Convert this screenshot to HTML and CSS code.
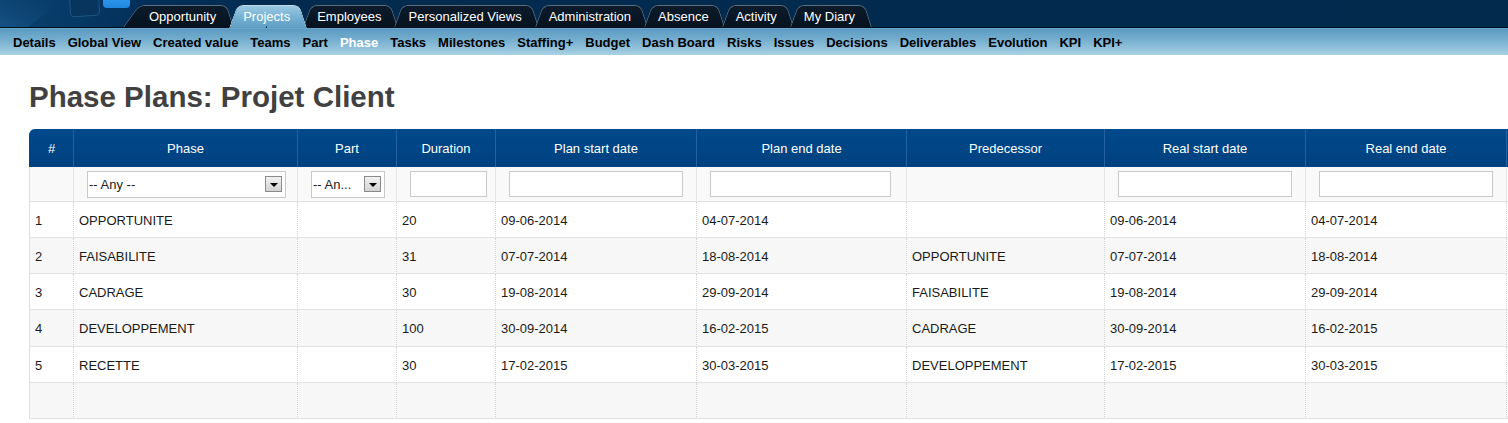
FILE: index.html
```html
<!DOCTYPE html>
<html lang="en">
<head>
<meta charset="utf-8">
<title>Phase Plans: Projet Client</title>
<link rel="stylesheet" href="styles.css">
</head>
<body>
<header class="topbar">
  <div class="logo">
    <svg width="136" height="27" viewBox="0 0 136 27" aria-hidden="true">
      <defs>
        <linearGradient id="glow" x1="0" y1="1" x2="1" y2="0">
          <stop offset="0" stop-color="#1a5a8e" stop-opacity=".7"/>
          <stop offset="1" stop-color="#0b3f6e" stop-opacity="0"/>
        </linearGradient>
        <linearGradient id="blue" x1="0" y1="0" x2="0" y2="1">
          <stop offset="0" stop-color="#3aa2f5"/>
          <stop offset="1" stop-color="#1f86e0"/>
        </linearGradient>
      </defs>
      <path d="M0 0 H62 L28 27 H0 Z" fill="url(#glow)"/>
      <rect x="70" y="-7" width="29" height="23" rx="4" fill="#08355e" stroke="#1d5684" stroke-width="1" transform="rotate(-4 85 5)"/>
      <rect x="103" y="-8" width="27" height="16" rx="4" fill="url(#blue)"/>
    </svg>
  </div>
  <nav class="tabs">
    <a class="tab first">Opportunity</a>
    <a class="tab active">Projects</a>
    <a class="tab">Employees</a>
    <a class="tab">Personalized Views</a>
    <a class="tab">Administration</a>
    <a class="tab">Absence</a>
    <a class="tab">Activity</a>
    <a class="tab">My Diary</a>
  </nav>
</header>
<nav class="subnav">
  <a>Details</a>
  <a>Global View</a>
  <a>Created value</a>
  <a>Teams</a>
  <a>Part</a>
  <a class="current">Phase</a>
  <a>Tasks</a>
  <a>Milestones</a>
  <a>Staffing+</a>
  <a>Budget</a>
  <a>Dash Board</a>
  <a>Risks</a>
  <a>Issues</a>
  <a>Decisions</a>
  <a>Deliverables</a>
  <a>Evolution</a>
  <a>KPI</a>
  <a>KPI+</a>
</nav>
<main class="content">
  <h1 class="title">Phase Plans: Projet Client</h1>
  <div class="table-wrap">
    <table class="grid">
      <colgroup>
        <col class="c-num"><col class="c-phase"><col class="c-part"><col class="c-dur">
        <col class="c-pstart"><col class="c-pend"><col class="c-pred"><col class="c-rstart">
        <col class="c-rend"><col class="c-extra">
      </colgroup>
      <thead>
        <tr class="head-row">
          <th>#</th><th>Phase</th><th>Part</th><th>Duration</th><th>Plan start date</th>
          <th>Plan end date</th><th>Predecessor</th><th>Real start date</th><th>Real end date</th><th></th>
        </tr>
        <tr class="filter-row">
          <td></td>
          <td><div class="fake-select w-phase"><span>-- Any --</span><span class="sel-btn"></span></div></td>
          <td><div class="fake-select w-part"><span>-- An...</span><span class="sel-btn"></span></div></td>
          <td><input class="filter-input w-dur" type="text"></td>
          <td><input class="filter-input w-pstart" type="text"></td>
          <td><input class="filter-input w-pend" type="text"></td>
          <td></td>
          <td><input class="filter-input w-rstart" type="text"></td>
          <td><input class="filter-input w-rend" type="text"></td>
          <td></td>
        </tr>
      </thead>
      <tbody>
        <tr><td>1</td><td>OPPORTUNITE</td><td></td><td>20</td><td>09-06-2014</td><td>04-07-2014</td><td></td><td>09-06-2014</td><td>04-07-2014</td><td></td></tr>
        <tr><td>2</td><td>FAISABILITE</td><td></td><td>31</td><td>07-07-2014</td><td>18-08-2014</td><td>OPPORTUNITE</td><td>07-07-2014</td><td>18-08-2014</td><td></td></tr>
        <tr><td>3</td><td>CADRAGE</td><td></td><td>30</td><td>19-08-2014</td><td>29-09-2014</td><td>FAISABILITE</td><td>19-08-2014</td><td>29-09-2014</td><td></td></tr>
        <tr class="tall"><td>4</td><td>DEVELOPPEMENT</td><td></td><td>100</td><td>30-09-2014</td><td>16-02-2015</td><td>CADRAGE</td><td>30-09-2014</td><td>16-02-2015</td><td></td></tr>
        <tr><td>5</td><td>RECETTE</td><td></td><td>30</td><td>17-02-2015</td><td>30-03-2015</td><td>DEVELOPPEMENT</td><td>17-02-2015</td><td>30-03-2015</td><td></td></tr>
        <tr class="empty"><td></td><td></td><td></td><td></td><td></td><td></td><td></td><td></td><td></td><td></td></tr>
      </tbody>
    </table>
  </div>
</main>
</body>
</html>
```

FILE: styles.css
```css
* { box-sizing: border-box; }

html, body {
  margin: 0;
  padding: 0;
  overflow: hidden;
}

body {
  font-family: "Liberation Sans", Arial, sans-serif;
  font-size: 13px;
  color: #1a1a1a;
  background: #fff;
}

/* ---------- top bar ---------- */
.topbar {
  display: flex;
  height: 28px;
  background: linear-gradient(100deg, #0b4372 0, #063a66 70px, #03305a 140px, #022b4f 260px, #012a4d 100%);
  border-bottom: 1px solid #00101e;
}

.logo {
  flex: none;
  width: 136px;
  height: 27px;
  overflow: hidden;
}

.logo svg { display: block; }

.tabs {
  display: flex;
  align-items: flex-end;
  gap: 1px;
  height: 27px;
}

.tab {
  position: relative;
  z-index: 1;
  height: 22px;
  line-height: 23px;
  padding: 0 13px;
  color: #fff;
  font-size: 13px;
  white-space: nowrap;
  text-decoration: none;
}

.tab::before,
.tab::after {
  content: "";
  position: absolute;
  top: 0;
  bottom: 0;
  z-index: -1;
  background: linear-gradient(#0c1b2b, #06121f);
  border: 1px solid #5c6d7e;
  border-bottom: none;
}

.tab::before {
  left: -1px;
  right: 50%;
  transform: skewX(-20deg);
  transform-origin: 0 100%;
  border-right: none;
  border-radius: 6px 0 0 0;
}

.tab::after {
  left: 50%;
  right: -4px;
  transform: skewX(18deg);
  transform-origin: 100% 100%;
  border-left: none;
  border-radius: 0 6px 0 0;
}

.tab.first::before {
  left: -13px;
  transform: skewX(-36deg);
}

.tab.active { z-index: 5; }

.tab.active::before,
.tab.active::after {
  bottom: -1px;
  background: linear-gradient(#9ac8e2, #74afd1 55%, #5e9ec4);
  border-color: #b9d9ea;
}

/* ---------- sub nav ---------- */
.subnav {
  display: flex;
  align-items: center;
  gap: 12px;
  height: 27px;
  padding-left: 13px;
  background: linear-gradient(#5b9bc1, #78b0d0 45%, #a9d1e4);
  border-top: 1px solid #6aa6c8;
}

.subnav a {
  font-weight: bold;
  font-size: 13px;
  color: #000;
  white-space: nowrap;
}

.subnav a.current { color: #fff; }

/* ---------- content ---------- */
.title {
  margin: 26px 0 16px 29px;
  font-size: 29.5px;
  line-height: 32px;
  font-weight: bold;
  color: #414141;
}

.table-wrap {
  margin-left: 29px;
  overflow: hidden;
}

.grid {
  table-layout: fixed;
  border-collapse: separate;
  border-spacing: 0;
  width: 1627px;
}

.c-num { width: 45px; }
.c-phase { width: 224px; }
.c-part { width: 99px; }
.c-dur { width: 99px; }
.c-pstart { width: 201px; }
.c-pend { width: 210px; }
.c-pred { width: 198px; }
.c-rstart { width: 201px; }
.c-rend { width: 201px; }
.c-extra { width: 149px; }

.head-row th {
  height: 38px;
  padding: 0 4px;
  background: linear-gradient(#00498b, #00417f);
  color: #fff;
  font-weight: normal;
  font-size: 13px;
  text-align: center;
  border-right: 1px solid #2461a0;
  white-space: nowrap;
}

.head-row th:first-child {
  border-left: 1px solid #00498b;
  border-top-left-radius: 6px;
}

.filter-row td {
  height: 35px;
  padding: 0 0 0 13px;
  background: #f9f9f9;
  border-right: 1px solid #e6e6e6;
  border-bottom: 1px solid #e2e2e2;
  vertical-align: middle;
}

.filter-row td:first-child { border-left: 1px solid #dedede; }

.fake-select {
  display: flex;
  align-items: center;
  justify-content: space-between;
  height: 27px;
  padding: 0 3px 0 1px;
  background: #fff;
  border: 1px solid #c9c9c9;
  color: #222;
  font-size: 13px;
  white-space: nowrap;
}

.sel-btn {
  display: flex;
  align-items: center;
  justify-content: center;
  width: 17px;
  height: 16px;
  padding-top: 2px;
  border: 1px solid #8a8a8a;
  background: linear-gradient(#f2f2f2, #d2d2d2);
}

.sel-btn::before {
  content: "";
  border-left: 4px solid transparent;
  border-right: 4px solid transparent;
  border-top: 4px solid #000;
}

.w-phase { width: 199px; }
.w-part { width: 74px; }

.filter-input {
  display: block;
  height: 26px;
  margin: 0;
  padding: 0 3px;
  border: 1px solid #c9c9c9;
  background: #fff;
  font: 13px "Liberation Sans", Arial, sans-serif;
}

.w-dur { width: 77px; }
.w-pstart { width: 174px; }
.w-pend { width: 181px; }
.w-rstart { width: 174px; }
.w-rend { width: 174px; }

tbody td {
  height: 36px;
  padding: 1px 5px 0;
  border-right: 1px dotted #d4d4d4;
  border-bottom: 1px solid #e2e2e2;
  background: #fff;
  white-space: nowrap;
  vertical-align: middle;
  font-size: 13px;
  color: #1a1a1a;
}

tbody tr.tall td { height: 37px; }

tbody td:first-child { border-left: 1px solid #dedede; }

tbody tr:nth-child(even) td { background: #f7f7f7; }
```
